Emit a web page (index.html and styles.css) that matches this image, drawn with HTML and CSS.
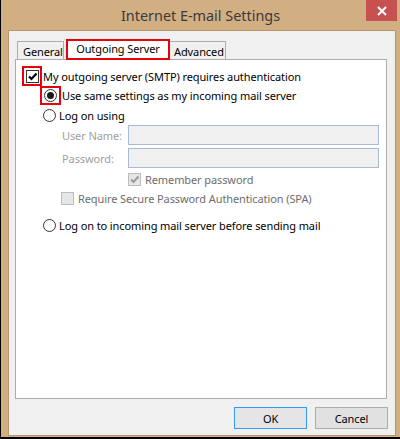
FILE: index.html
```html
<!DOCTYPE html>
<html>
<head>
<meta charset="utf-8">
<link rel="stylesheet" href="styles.css">
</head>
<body>
<div class="window">
  <div class="titlebar">
    <div class="spacer"></div>
    <div class="title">Internet E-mail Settings</div>
    <div class="tb-right">
      <div class="close">
        <svg width="10" height="10" viewBox="0 0 10 10"><path d="M1 1 L9 9 M9 1 L1 9" stroke="#fff" stroke-width="2" fill="none"/></svg>
      </div>
    </div>
  </div>
  <div class="client">
    <div class="tabs">
      <div class="tab">General</div>
      <div class="tab active">Outgoing Server</div>
      <div class="tab adv">Advanced</div>
    </div>
    <div class="panel">
      <div class="row r1">
        <div class="mark mark-check">
          <span class="chk">
            <svg width="11" height="11" viewBox="0 0 11 11"><path d="M2 5.5 L4.5 8 L9.5 2.5" stroke="#000" stroke-width="2.2" fill="none"/></svg>
          </span>
        </div>
        <span class="lbl">My outgoing server (SMTP) requires authentication</span>
      </div>
      <div class="row r2">
        <div class="mark mark-radio"><span class="radio on"></span></div>
        <span class="lbl">Use same settings as my incoming mail server</span>
      </div>
      <div class="row r3">
        <span class="radio"></span>
        <span class="lbl">Log on using</span>
      </div>
      <div class="row r4">
        <span class="field-lbl">User Name:</span>
        <span class="input"></span>
      </div>
      <div class="row r5">
        <span class="field-lbl">Password:</span>
        <span class="input"></span>
      </div>
      <div class="row r6">
        <span class="chk dis">
          <svg width="11" height="11" viewBox="0 0 11 11"><path d="M2 5.5 L4.5 8 L9.5 2.5" stroke="#9a9a9a" stroke-width="2" fill="none"/></svg>
        </span>
        <span class="lbl dis-lbl">Remember password</span>
      </div>
      <div class="row r7">
        <span class="chk dis"></span>
        <span class="lbl dis-lbl">Require Secure Password Authentication (SPA)</span>
      </div>
      <div class="row r8">
        <span class="radio"></span>
        <span class="lbl">Log on to incoming mail server before sending mail</span>
      </div>
    </div>
    <div class="buttons">
      <div class="btn default">OK</div>
      <div class="btn">Cancel</div>
    </div>
  </div>
</div>
</body>
</html>
```

FILE: styles.css
```css
* { box-sizing: border-box; }
html, body { margin: 0; padding: 0; }
body {
  width: 400px;
  height: 439px;
  overflow: hidden;
  font-family: "Noto Sans", "Open Sans", sans-serif;
  font-size: 11px;
  letter-spacing: -0.1px;
  color: #000;
}
.window {
  width: 400px;
  height: 439px;
  background: #d2ae83;
  border-left: 1px solid #000;
  border-bottom: 2px solid #000;
  padding: 0 3px 1px 7px;
  display: flex;
  flex-direction: column;
}
.titlebar {
  height: 30px;
  margin-left: -7px;
  margin-right: -3px;
  display: grid;
  grid-template-columns: 1fr auto 1fr;
  align-items: start;
}
.title {
  font-size: 14.4px;
  color: #3a3a3a;
  line-height: 30px;
  padding-top: 1px;
  letter-spacing: 0;
}
.tb-right {
  display: flex;
  justify-content: flex-end;
  padding-right: 3px;
}
.close {
  width: 31px;
  height: 21px;
  background: #c75050;
  display: flex;
  align-items: center;
  justify-content: center;
}
.client {
  width: 388px;
  height: 406px;
  background: #f0f0f0;
  border: 1px solid #b8956b;
  display: flex;
  flex-direction: column;
}
.tabs {
  display: flex;
  align-items: flex-end;
  padding: 8px 0 0 8px;
  margin-bottom: -1px;
  position: relative;
  z-index: 1;
}
.tab {
  height: 18px;
  margin-bottom: 1px;
  border: 1px solid #adadad;
  border-bottom: none;
  background: #f0f0f0;
  padding: 2px 0 0 5px;
  line-height: 16px;
  white-space: nowrap;
}
.tab:first-child { width: 47px; margin-right: 2px; }
.tab.active {
  width: 104px;
  height: 21px;
  margin-bottom: 0;
  border: 2px solid #e8000b;
  background: #fff;
  text-align: center;
  line-height: 15px;
  padding: 0;
}
.tab.adv { width: 56px; border-left: none; padding-left: 4px; }
.panel {
  margin-left: 6px;
  width: 372px;
  height: 340px;
  background: #fff;
  border: 1px solid #adadad;
  padding-top: 6px;
}
.row {
  display: flex;
  align-items: center;
}
.lbl { white-space: nowrap; }
.mark {
  border: 2px solid #e8000b;
  display: flex;
  align-items: center;
  justify-content: center;
  flex: none;
}
.r1 { height: 20px; margin-left: 6px; }
.mark-check { width: 20px; height: 20px; margin-right: 1px; }
.r2 { height: 19px; margin-left: 24px; }
.mark-radio { width: 21px; height: 19px; margin-right: 1px; padding-right: 1px; }
.r3 { height: 20px; margin-left: 27px; }
.r3 .lbl, .r8 .lbl { margin-left: 3px; }
.r4 { height: 20px; margin-left: 46px; }
.r5 { height: 20px; margin-left: 46px; margin-top: 3px; }
.r6 { height: 16px; margin-left: 112px; margin-top: 3px; }
.r7 { height: 16px; margin-left: 45px; margin-top: 3px; }
.r6 .lbl, .r7 .lbl { margin-left: 4px; }
.r8 { height: 16px; margin-left: 27px; margin-top: 11px; }
.chk {
  width: 13px;
  height: 13px;
  border: 1px solid #333;
  background: #fff;
  display: flex;
  align-items: center;
  justify-content: center;
  flex: none;
}
.chk.dis {
  border-color: #bcbcbc;
  background: #e6e6e6;
}
.radio {
  width: 13px;
  height: 13px;
  border: 1px solid #333;
  border-radius: 50%;
  background: #fff;
  display: flex;
  align-items: center;
  justify-content: center;
  flex: none;
}
.radio.on::after {
  content: "";
  width: 7px;
  height: 7px;
  border-radius: 50%;
  background: #1a1a1a;
}
.field-lbl {
  width: 66px;
  flex: none;
  white-space: nowrap;
  color: #a0a0a0;
}
.input {
  width: 251px;
  height: 20px;
  flex: none;
  background: #f0f0f0;
  border: 1px solid #a7bbd3;
}
.dis-lbl { color: #6d6d6d; }
.buttons {
  display: flex;
  justify-content: flex-end;
  gap: 8px;
  margin-top: 8px;
  padding-right: 7px;
}
.btn {
  width: 73px;
  height: 22px;
  border: 1px solid #adadad;
  background: #e1e1e1;
  display: flex;
  align-items: center;
  justify-content: center;
}
.btn.default {
  border-color: #3399ff;
  background: #e5e5e5;
}
```
